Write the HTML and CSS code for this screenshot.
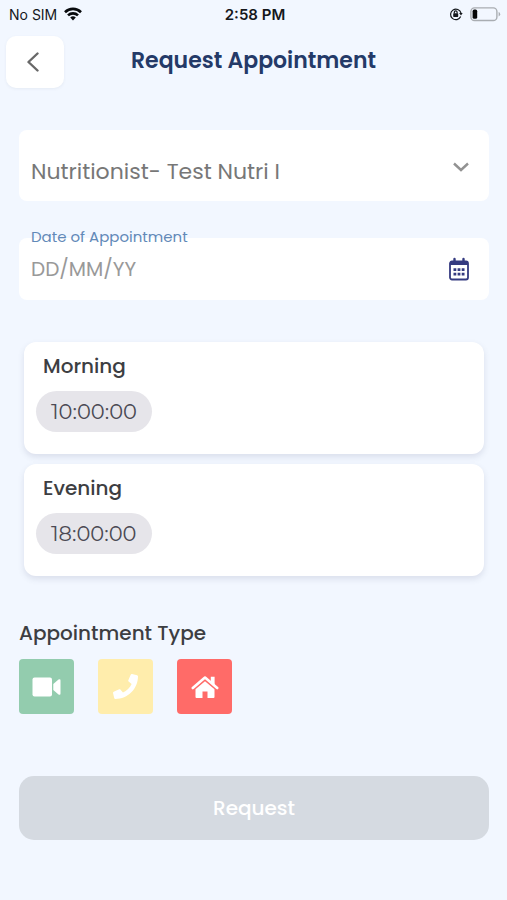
FILE: index.html
```html
<!DOCTYPE html>
<html lang="en">
<head>
<meta charset="utf-8">
<meta name="viewport" content="width=device-width, initial-scale=1">
<title>Request Appointment</title>
<link rel="stylesheet" href="styles.css">
</head>
<body>
<div class="status">
  <div class="status-side">
    <span class="carrier">No SIM</span>
    <svg width="18" height="14" viewBox="0 0 18 14" fill="none" stroke="#080a0d" stroke-width="2.6" aria-hidden="true"><path d="M1 5.2a11.4 11.4 0 0 1 16 0M4 8.4a7.2 7.2 0 0 1 10 0"/><path d="M6.2 10.6a4.1 4.1 0 0 1 5.6 0L9 13.6z" fill="#080a0d" stroke="none"/></svg>
  </div>
  <span class="clock">2:58 PM</span>
  <div class="status-side status-end">
    <svg width="14" height="14" viewBox="0 0 14 14" fill="none" stroke="#15181c" stroke-width="1.2" aria-hidden="true"><path d="M11.7 9.6A5.3 5.3 0 1 1 12 6"/><path d="M10.1 6h3.6l-1.7 2.6z" fill="#15181c" stroke="none"/><rect x="4.2" y="6.3" width="5" height="3.6" rx=".6" fill="#15181c" stroke="none"/><path d="M5.3 6.5V5.3a1.4 1.4 0 0 1 2.8 0v1.2"/></svg>
    <svg width="31" height="15" viewBox="0 0 31 15" aria-hidden="true"><rect x=".9" y=".9" width="26" height="12.6" rx="3.6" fill="none" stroke="#a9adb2" stroke-width="1.4"/><rect x="2.6" y="2.6" width="4.6" height="9.2" rx="1.6" fill="#050607"/><path d="M28.6 5v4.4q1.6-.6 1.6-2.2T28.6 5" fill="#a9adb2"/></svg>
  </div>
</div>
<header class="header">
  <button class="back" type="button" aria-label="Back">
    <svg width="14" height="20" viewBox="0 0 14 20" fill="none" stroke="#686868" stroke-width="2.4" stroke-linecap="round" stroke-linejoin="round"><path d="M11.5 1.500 2.500 10l9 8.500"/></svg>
  </button>
  <h1 class="title">Request Appointment</h1>
</header>
<main>
  <form class="form">
    <div class="field">
      <select class="provider" aria-label="Provider"><option>Nutritionist- Test Nutri I</option></select>
      <svg class="chevron" width="16" height="10" viewBox="0 0 16 10" fill="none" stroke="#929292" stroke-width="2.4" aria-hidden="true"><path d="M1 1.500l7 6.500 7-6.500"/></svg>
    </div>
    <div class="field date-field">
      <label class="date-label" for="date">Date of Appointment</label>
      <input class="date" id="date" type="text" placeholder="DD/MM/YY">
      <button class="calendar" type="button" aria-label="Choose date">
        <svg width="20" height="24" viewBox="0 0 20 24"><rect x="1" y="4.500" width="18" height="18" rx="2" fill="none" stroke="#343a80" stroke-width="1.800"/><path d="M1 4.500h18v3.500H1z" fill="#343a80"/><path d="M5.500 2v3M14.500 2v3" stroke="#343a80" stroke-width="2.400" stroke-linecap="round"/><path d="M4.500 11.300h2.800v2.800H4.500zM8.600 11.300h2.800v2.800H8.600zM12.700 11.300h2.800v2.800h-2.800zM4.500 15.800h2.800v2.800H4.500zM8.600 15.800h2.800v2.800H8.600zM12.700 15.800h2.800v2.800h-2.800z" fill="#343a80"/></svg>
      </button>
    </div>
    <div class="slots">
      <section class="card">
        <h2 class="heading">Morning</h2>
        <button class="time" type="button">10:00:00</button>
      </section>
      <section class="card">
        <h2 class="heading">Evening</h2>
        <button class="time" type="button">18:00:00</button>
      </section>
    </div>
    <h2 class="heading">Appointment Type</h2>
    <div class="types">
      <button class="type video" type="button" aria-label="Video">
        <svg width="30" height="20" viewBox="0 0 30 20" fill="#fff"><rect x=".5" y=".5" width="19.500" height="19" rx="2"/><path d="M21.300 7 26.500 2.600q2-1.200 2 .8v13.200q0 2-2 .8L21.300 13z"/></svg>
      </button>
      <button class="type phone" type="button" aria-label="Phone">
        <svg width="25" height="25" viewBox="0 0 512 512" fill="#fff"><path d="M493.400 24.600l-104-24c-11.300-2.600-22.900 3.300-27.500 13.900l-48 112c-4.200 9.800-1.400 21.300 6.900 28l60.600 49.600c-36 76.700-98.900 140.500-177.200 177.200l-49.600-60.600c-6.800-8.300-18.200-11.100-28-6.900l-112 48C3.900 366.500-2 378.100.6 389.400l24 104C27.100 504.200 36.700 512 48 512c256.100 0 464-207.500 464-464 0-11.200-7.700-20.900-18.600-23.400z"/></svg>
      </button>
      <button class="type home" type="button" aria-label="Home">
        <svg width="28" height="24" viewBox="0 0 28 24" fill="#fff"><path d="M1.800 13 14 2.600 26.200 13" fill="none" stroke="#fff" stroke-width="2.600" stroke-linecap="round" stroke-linejoin="round"/><path d="M19.800 1.800h3.800v8.600L19.800 7.300z"/><path d="M14 6.200 23.500 14.300V22q0 1-1 1h-6v-6.500h-5V23h-6q-1 0-1-1v-7.700z"/></svg>
      </button>
    </div>
    <button class="submit" type="submit" disabled>Request</button>
  </form>
</main>
</body>
</html>
```
FILE: styles.css
```css
* {
  box-sizing: border-box;
}

body {
  margin: 0;
  min-height: 100vh;
  background: #f2f7ff;
  font-family: Poppins, Inter, "Liberation Sans", sans-serif;
  color: #3d3e42;
}

button,
input,
select {
  border: 0;
  font-family: inherit;
}

button {
  display: flex;
  align-items: center;
  justify-content: center;
  padding: 0;
}

svg {
  display: block;
}

.status {
  display: grid;
  grid-template-columns: 1fr auto 1fr;
  align-items: center;
  height: 28px;
  padding: 0 6px 0 9px;
  font-family: Inter, sans-serif;
  font-size: 14px;
  color: #15181c;
}

.status-side {
  display: flex;
  align-items: center;
  gap: 7px;
}

.status-end {
  justify-content: flex-end;
}

.clock {
  font-size: 15px;
  font-weight: 600;
}

.header {
  display: grid;
  grid-template-columns: 58px 1fr 58px;
  padding: 8px 6px 0;
}

.back {
  height: 52px;
  padding-right: 5px;
  border-radius: 10px;
  background: #fff;
  box-shadow: 0 1px 3px rgba(80, 90, 110, 0.08);
}

.title {
  margin: 9px 0 0;
  font-size: 22px;
  line-height: 32px;
  font-weight: 600;
  text-align: center;
  color: #243a68;
}

.form {
  display: flex;
  flex-direction: column;
  padding: 42px 18px 0 19px;
}

.field {
  position: relative;
  display: flex;
  border-radius: 8px;
  background: #fff;
}

.provider {
  width: 100%;
  height: 71px;
  padding: 11px 48px 0 12px;
  appearance: none;
  border-radius: 8px;
  background: transparent;
  font-size: 22px;
  color: #777;
}

.chevron {
  position: absolute;
  top: 32px;
  right: 20px;
  pointer-events: none;
}

.date-field {
  margin-top: 37px;
  align-items: center;
  padding-right: 20px;
}

.date-label {
  position: absolute;
  top: -11px;
  left: 12px;
  font-size: 15px;
  line-height: 20px;
  color: #6289b8;
}

.date {
  flex: 1;
  min-width: 0;
  height: 62px;
  padding: 0 12px;
  background: transparent;
  font-size: 20px;
}

.date::placeholder {
  color: #999;
}

.calendar {
  background: transparent;
}

.slots {
  display: grid;
  gap: 10px;
  margin: 42px 5px 41px;
}

.card {
  padding: 8px 12px 22px;
  border-radius: 12px;
  background: #fff;
  box-shadow: 0 3px 6px rgba(70, 80, 110, 0.14);
}

.heading {
  margin: 0;
  font-size: 20px;
  line-height: 32px;
  font-weight: 500;
}

.card .heading {
  padding-left: 7px;
}

.time {
  height: 41px;
  margin-top: 9px;
  padding: 0 15px;
  border-radius: 21px;
  background: #e6e5ea;
  font-family: Montserrat, Inter, sans-serif;
  font-size: 21px;
  color: #4b4a54;
}

.types {
  display: flex;
  gap: 24px;
  margin-top: 10px;
}

.type {
  width: 55px;
  height: 55px;
  border-radius: 4px;
}

.video {
  background: #93ccae;
}

.phone {
  background: #ffedac;
}

.home {
  background: #ff6b68;
}

.submit {
  height: 64px;
  margin-top: 62px;
  border-radius: 15px;
  background: #d5dae1;
  font-size: 20px;
  font-weight: 500;
  color: #fff;
}
```
